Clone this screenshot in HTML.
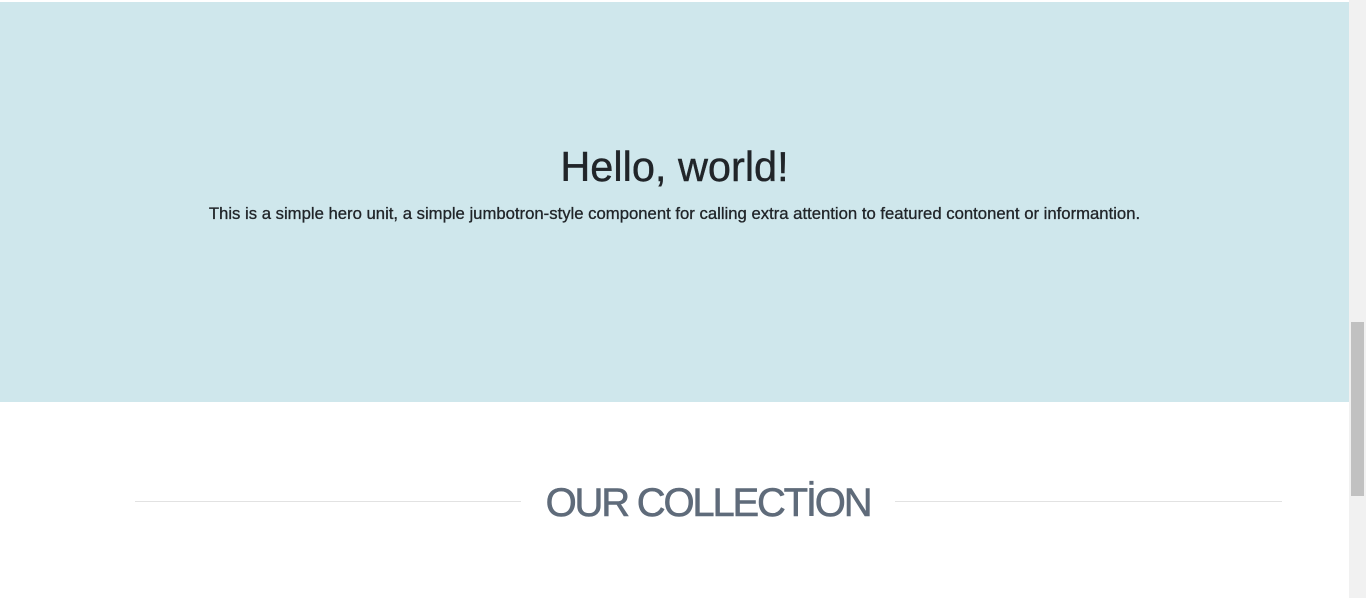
<!DOCTYPE html>
<html><head><style>
body{margin:0;width:1366px;height:598px;overflow:hidden;background:#fff;font-family:"Liberation Sans",sans-serif;position:relative}
.hero{position:absolute;left:0;top:2px;width:1349px;height:400px;background:#cfe7ec;color:#212529;text-align:center}
h1{position:absolute;left:0;width:1349px;top:141px;margin:0;font-size:41.5px;font-weight:normal;line-height:48px;-webkit-text-stroke:0.4px #212529}
p{position:absolute;left:0;width:1349px;top:202px;margin:0;font-size:16.7px;line-height:20px;-webkit-text-stroke:0.3px #212529}
.sb{position:absolute;left:1349px;top:0;width:17px;height:598px;background:#f1f1f1}
.th{position:absolute;left:1351px;top:322px;width:13px;height:174px;background:#c1c1c1}
.ln{position:absolute;top:501px;height:1px;background:#e2e2e2}
.t{position:absolute;left:0;width:1416px;top:478px;text-align:center;font-size:40px;line-height:50px;color:#5f6b7a;letter-spacing:-2.2px;-webkit-text-stroke:0.6px #5f6b7a}
</style></head><body>
<div class="hero"><h1>Hello, world!</h1><p>This is a simple hero unit, a simple jumbotron-style component for calling extra attention to featured contonent or informantion.</p></div>
<div class="ln" style="left:135px;width:386px"></div>
<div class="ln" style="left:895px;width:387px"></div>
<div class="t">OUR COLLECTİON</div>
<div class="sb"></div><div class="th"></div>
</body></html>
